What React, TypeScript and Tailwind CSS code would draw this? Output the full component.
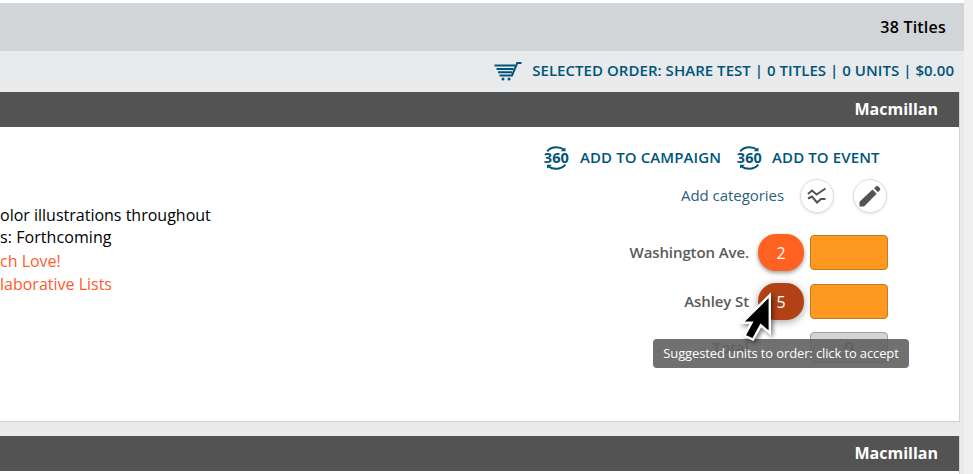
function CartIcon() {
  return (
    <svg className="h-5 w-7 shrink-0" viewBox="0 0 28 20" fill="none" stroke="#00557a">
      <path d="M27.500 2H23.200L18 14.500H5.500" strokeWidth="2" />
      <path d="M0.500 4.500H21M2.500 8H19.500M4 11.300H18" strokeWidth="2" />
      <circle cx="9" cy="18" r="1.5" fill="#00557a" stroke="none" />
      <circle cx="15" cy="18" r="1.5" fill="#00557a" stroke="none" />
    </svg>
  );
}

function Icon360() {
  return (
    <svg className="h-6 w-[25px] shrink-0" viewBox="0 0 25 24" fill="none">
      <path d="M3.200 5.300Q6.500 1.200 12.300 1.200Q17 1.200 19.800 3.600" stroke="#00557a" strokeWidth="2" />
      <path d="M21.500 1.500V5.300H16.500Z" fill="#00557a" />
      <path d="M21.300 18.700Q18 22.800 12.200 22.800Q7.500 22.800 4.700 20.400" stroke="#00557a" strokeWidth="2" />
      <path d="M3 22.500V18.700H8Z" fill="#00557a" />
      <text x="-0.2" y="16.800" textLength="25" lengthAdjust="spacingAndGlyphs" fill="#00557a" fontFamily="Open Sans, sans-serif" fontSize="14" fontWeight="700">360</text>
    </svg>
  );
}

function PublisherBar() {
  return (
    <div className="flex h-[35px] items-center justify-end bg-[#535353] pb-0.5 pr-[21px] text-base font-bold text-white">
      <span>Macmillan</span>
    </div>
  );
}

function StoreRow({ name, units, active }: { name: string; units: number; active?: boolean }) {
  return (
    <div className="flex h-[49px] items-center justify-end">
      <span className="mr-[9px] text-[15px] font-semibold tracking-[-0.1px] text-[#5a5a5a]">{name}</span>
      <button
        className={`mr-1.5 h-[37px] w-[46px] rounded-[18px] text-base text-white ${
          active
            ? "bg-[#b04216] shadow-[0_2px_8px_rgba(0,0,0,0.35)]"
            : "bg-[#ff6120] shadow-[0_2px_4px_rgba(0,0,0,0.4)]"
        }`}
      >
        {units}
      </button>
      <div className="h-[35px] w-[78px] rounded border border-[#c77a1c] bg-[#fd9821]"></div>
    </div>
  );
}

export default function App() {
  return (
    <div className="relative flex h-[474px] w-[973px] overflow-hidden bg-[#f0f0f0] font-['Open_Sans',sans-serif]">
      <div className="w-[964px] bg-[#e8eaec]">
        <div className="h-[3px] bg-white"></div>
        <div className="flex h-12 items-center justify-end bg-[#d1d5d8] pr-[18px] text-base font-semibold tracking-[0.22px] text-black">
          38 Titles
        </div>
        <div className="flex h-[41px] items-center justify-end pb-0.5 pr-[10px] text-[15px] font-semibold text-[#00557a]">
          <CartIcon />
          <span className="ml-[10px] whitespace-pre tracking-[0.04px]">SELECTED ORDER: SHARE TEST | 0 TITLES | 0 UNITS | $0.00</span>
        </div>

        <div className="w-[960px] border-r border-[#cfd3d6]">
          <PublisherBar />
          <div className="flex h-[295px] justify-between border-b border-[#cfd3d6] bg-white pr-[71px]">
            <div className="whitespace-nowrap pt-[77px] text-base leading-[23px] text-black">
              <p className="h-[22px] leading-[22px]">olor illustrations throughout</p>
              <p className="mb-px tracking-[0.07px]">s: Forthcoming</p>
              <p className="text-[#ff5a2c]">ch Love!</p>
              <p className="text-[#ff5a2c]">laborative Lists</p>
            </div>

            <div className="w-[344px] pt-[18px]">
              <div className="flex h-[25px] items-center text-[15px] font-semibold text-[#00557a]">
                <Icon360 />
                <span className="ml-[11px] whitespace-nowrap tracking-[0.1px]">ADD TO CAMPAIGN</span>
                <span className="ml-4 flex items-center gap-[10px] whitespace-nowrap tracking-[0.1px]"><Icon360 />ADD TO EVENT</span>
              </div>
              <div className="mr-px mt-2 flex h-[35px] items-center justify-end text-[15px] text-[#2b5f7c]">
                <span className="mr-4 tracking-[-0.05px]">Add categories</span>
                <div className="mr-[19px] flex size-[34px] items-center justify-center rounded-full border border-[#dcdcdc] shadow-sm">
                  <svg className="h-[18px] w-[20px]" viewBox="0 0 20 18" fill="none" stroke="#535353" strokeWidth="2">
                    <path d="M1 7L5 3.500L9.500 7.500L18.500 1.500" />
                    <path d="M1 11.500L5 9.500L10 15.500L14 12H18.500" />
                  </svg>
                </div>
                <div className="flex size-[34px] items-center justify-center rounded-full border border-[#dcdcdc] shadow-sm">
                  <svg className="h-[22px] w-[22px]" viewBox="0 0 22 22" fill="#535353">
                    <path d="M0.500 21.500V16.800L13.500 4.500L17.700 8.700L5 21.500Z" />
                    <path d="M15 3.200L17.200 1.200Q18.200 0.500 19 1.300L21 3.300Q21.700 4.200 21 5L19 7.200Z" />
                  </svg>
                </div>
              </div>

              <div className="mt-[15px]">
                <StoreRow name="Washington Ave." units={2} />
                <StoreRow name="Ashley St" units={5} active />
                <div className="flex h-[43px] items-center justify-end">
                  <span className="mr-[61px] text-[15px] font-semibold text-[#5a5a5a]">Total</span>
                  <div className="flex h-[31px] w-[78px] items-center justify-center rounded border border-[#9da2a5] bg-[#d1d5d8] text-base font-semibold text-[#535353]">
                    0
                  </div>
                </div>
              </div>
            </div>
          </div>
        </div>

        <div className="mt-[14px] w-[960px] border-r border-[#cfd3d6] bg-white pb-1">
          <PublisherBar />
        </div>
      </div>

      <div className="absolute left-[653px] top-[339px] flex h-[29px] w-[256px] items-center justify-center whitespace-nowrap rounded bg-[#616161]/90 text-[13px] tracking-[-0.12px] text-white">
        Suggested units to order: click to accept
      </div>
      <svg className="absolute left-[735px] top-[286px] h-[62px] w-[44px] drop-shadow-[2px_2px_2px_rgba(0,0,0,0.5)]" viewBox="0 0 44 62">
        <path d="M34.800 9.200V47L25.800 39.300L18 53.500L9.500 49.800L16.500 36.800H6.800Z" fill="#000" stroke="#fff" strokeWidth="2.400" />
      </svg>
    </div>
  );
}
